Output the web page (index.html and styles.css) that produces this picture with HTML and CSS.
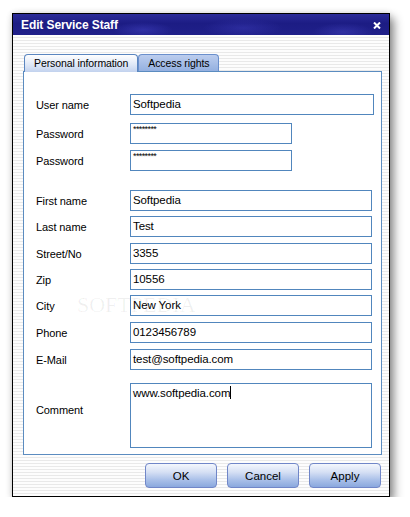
FILE: index.html
```html
<!DOCTYPE html>
<html>
<head>
<meta charset="utf-8">
<link rel="stylesheet" href="styles.css">
</head>
<body>
<div class="window">
  <div class="titlebar">
    <span class="title">Edit Service Staff</span>
    <svg class="close" width="8" height="7" viewBox="0 0 8 7"><path d="M1 0.5 L7 6.5 M7 0.5 L1 6.5" stroke="#fff" stroke-width="2" fill="none"/></svg>
  </div>
  <div class="content">
    <div class="tabs">
      <div class="tab active">Personal information</div>
      <div class="tab">Access rights</div>
    </div>
    <div class="panel">
      <div class="form">
        <div class="row"><span class="label">User name</span><div class="field wide">Softpedia</div></div>
        <div class="row mt8"><span class="label">Password</span><div class="field short"><span class="stars">********</span></div></div>
        <div class="row mt6"><span class="label">Password</span><div class="field short"><span class="stars">********</span></div></div>
        <div class="row mt19"><span class="label">First name</span><div class="field">Softpedia</div></div>
        <div class="row mt5"><span class="label">Last name</span><div class="field">Test</div></div>
        <div class="row mt6"><span class="label">Street/No</span><div class="field">3355</div></div>
        <div class="row mt5"><span class="label">Zip</span><div class="field">10556</div></div>
        <div class="row mt5"><span class="label">City</span><div class="field">New York</div></div>
        <div class="row mt6"><span class="label">Phone</span><div class="field">0123456789</div></div>
        <div class="row mt6"><span class="label">E-Mail</span><div class="field">test@softpedia.com</div></div>
        <div class="row mt13"><span class="label label-up">Comment</span><div class="field area">www.softpedia.com<span class="caret"></span></div></div>
      </div>
      <div class="watermark">SOFTPEDIA</div>
    </div>
    <div class="buttons">
      <button class="btn">OK</button>
      <button class="btn">Cancel</button>
      <button class="btn">Apply</button>
    </div>
  </div>
</div>
</body>
</html>
```
FILE: styles.css
```css
html, body {
  margin: 0;
  padding: 0;
  background: #ffffff;
}
body {
  font-family: "Liberation Sans", Arial, sans-serif;
  font-size: 11px;
  color: #000;
}
.window {
  margin: 13px 0 0 12px;
  width: 378px;
  height: 484px;
  box-sizing: border-box;
  border: 1px solid #000;
  box-shadow: 4px 5px 9px rgba(0,0,0,0.45), 0 0 6px rgba(0,0,0,0.12);
  display: flex;
  flex-direction: column;
}
.titlebar {
  height: 21px;
  display: flex;
  align-items: center;
  justify-content: space-between;
  padding: 0 8px 0 8px;
  background:
    radial-gradient(ellipse 30px 8px at 130px 16px, rgba(70,70,200,0.45), transparent),
    radial-gradient(ellipse 40px 9px at 230px 14px, rgba(70,70,200,0.35), transparent),
    radial-gradient(ellipse 30px 9px at 330px 18px, rgba(80,80,210,0.35), transparent),
    linear-gradient(to bottom, #2a2a98 0%, #1c1c84 45%, #20208a 100%);
}
.title {
  color: #fff;
  font-weight: bold;
  font-size: 12px;
  letter-spacing: -0.1px;
}
.close {
  display: block;
  margin-top: 1px;
}
.content {
  flex: 1;
  display: flex;
  flex-direction: column;
  padding: 19px 7px 8px 10px;
  background: repeating-linear-gradient(to bottom, #fdfdfd 0px, #fdfdfd 2px, #e9e9e9 2px, #e9e9e9 3px);
}
.tabs {
  display: flex;
  height: 17px;
  padding-left: 1px;
  position: relative;
  z-index: 1;
}
.tab {
  height: 17px;
  box-sizing: border-box;
  padding: 1px 9px 0 9px;
  border: 1px solid #6a8fcc;
  border-bottom: none;
  border-radius: 4px 4px 0 0;
  font-size: 10.5px;
  letter-spacing: -0.1px;
  line-height: 15px;
  background: linear-gradient(to bottom, #bccdee 0%, #94b0e0 100%);
}
.tab.active {
  height: 18px;
  background: linear-gradient(to bottom, #ffffff 0%, #dde6f6 60%, #c2d2ee 100%);
  border-color: #5b86c0;
}
.panel {
  height: 384px;
  box-sizing: border-box;
  border: 1px solid #5b8cc0;
  background: #fff;
  padding: 22px 0 6px 12px;
  position: relative;
}
.form {
  display: flex;
  flex-direction: column;
  position: relative;
  z-index: 1;
}
.row {
  display: flex;
  align-items: center;
}
.mt5 { margin-top: 5px; }
.mt6 { margin-top: 6px; }
.mt8 { margin-top: 8px; }
.mt13 { margin-top: 13px; }
.mt19 { margin-top: 19px; }
.label {
  width: 94px;
  font-size: 11px;
  letter-spacing: -0.1px;
}
.label-up {
  margin-bottom: 11px;
}
.field {
  width: 242px;
  height: 21px;
  box-sizing: border-box;
  border: 1px solid #5186bd;
  padding: 2px 0 0 2px;
  font-size: 11.5px;
  line-height: 14px;
  letter-spacing: -0.1px;
  white-space: nowrap;
}
.field.wide { width: 244px; }
.field.short { width: 162px; }
.field.area { height: 65px; }
.stars {
  font-size: 9px;
  letter-spacing: -0.6px;
  line-height: 9px;
  vertical-align: top;
  display: inline-block;
  margin-top: -1px;
}
.caret {
  display: inline-block;
  width: 1px;
  height: 13px;
  background: #000;
  vertical-align: -2px;
}
.watermark {
  position: absolute;
  left: 53px;
  top: 220px;
  font-family: "Liberation Serif", serif;
  font-size: 22px;
  color: rgba(0,0,0,0.06);
  pointer-events: none;
}
.buttons {
  display: flex;
  justify-content: flex-end;
  gap: 10px;
  margin-top: 8px;
  padding-right: 1px;
}
.btn {
  width: 72px;
  height: 25px;
  margin: 0;
  padding: 0;
  border: 1px solid #7086c8;
  border-radius: 4px;
  font-family: "Liberation Sans", Arial, sans-serif;
  font-size: 11.5px;
  color: #000;
  background: linear-gradient(to bottom, #f4f7fd 0%, #d6e0f4 35%, #a8bfe8 70%, #8aa8de 100%);
}
```
